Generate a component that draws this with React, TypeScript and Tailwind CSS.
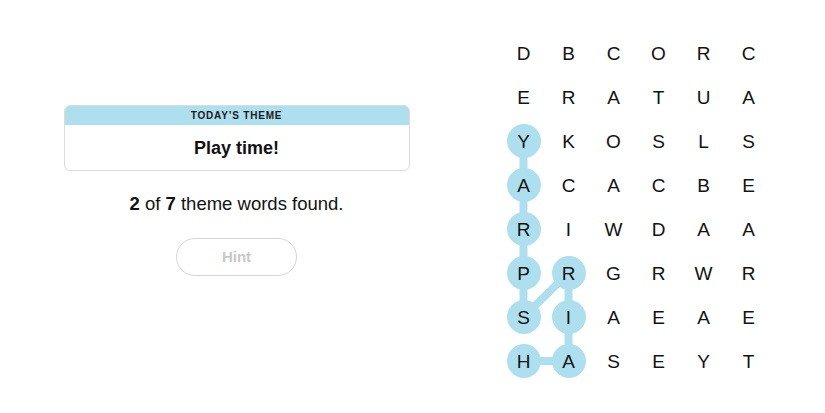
import React from "react";

const GRID = [
  "DBCORC",
  "ERATUA",
  "YKOSLS",
  "ACACBE",
  "RIWDAA",
  "PRGRWR",
  "SIAEAE",
  "HASEYT",
];

const PATH: [number, number][] = [
  [0, 7],
  [1, 7],
  [1, 6],
  [1, 5],
  [0, 6],
  [0, 5],
  [0, 4],
  [0, 3],
  [0, 2],
];

const CW = 45;
const CH = 44;

export default function App() {
  const selected = new Set(PATH.map(([c, r]) => `${c},${r}`));
  const cx = (c: number) => c * CW + CW / 2;
  const cy = (r: number) => r * CH + CH / 2;
  return (
    <div
      className="flex h-[413px] w-[825px] bg-white text-[#121212]"
      style={{ fontFamily: '"Liberation Sans", Arial, sans-serif' }}
    >
      <div className="flex w-[473px] flex-col items-center pt-[105px]">
        <div className="w-[346px] overflow-hidden rounded-[6px] border border-[#dcdcdc]">
          <div className="flex h-[19px] items-center justify-center bg-[#aedfee] text-[10px] font-bold tracking-[0.08em] text-[#1a1a1a]">
            TODAY&rsquo;S THEME
          </div>
          <div className="flex h-[45px] items-center justify-center text-[18px] font-bold leading-none">
            Play time!
          </div>
        </div>
        <div className="mt-[21px] text-[18.5px] leading-[24px]">
          <span className="font-bold">2</span> of <span className="font-bold">7</span> theme words found.
        </div>
        <button className="mt-[22px] flex h-[38px] w-[121px] items-center justify-center rounded-full border border-[#d6d6d6] text-[15px] font-bold text-[#c8c8c8]">
          Hint
        </button>
      </div>
      <div className="ml-[28px] pt-[31px]">
        <div className="relative h-[352px] w-[270px]">
          <svg className="absolute left-0 top-0" width={270} height={352}>
            {PATH.slice(1).map(([c, r], i) => {
              const [pc, pr] = PATH[i];
              return (
                <line
                  key={i}
                  x1={cx(pc)}
                  y1={cy(pr)}
                  x2={cx(c)}
                  y2={cy(r)}
                  stroke="#aedfee"
                  strokeWidth={8}
                  strokeLinecap="round"
                />
              );
            })}
          </svg>
          <div className="relative grid grid-cols-[repeat(6,45px)] grid-rows-[repeat(8,44px)]">
            {GRID.map((row, r) =>
              row.split("").map((ch, c) => {
                const on = selected.has(`${c},${r}`);
                return (
                  <div key={`${c}-${r}`} className="flex items-center justify-center">
                    <div
                      className={
                        "flex h-[34px] w-[34px] items-center justify-center rounded-full text-[19px] leading-none " +
                        (on ? "bg-[#aedfee]" : "")
                      }
                    >
                      {ch}
                    </div>
                  </div>
                );
              })
            )}
          </div>
        </div>
      </div>
    </div>
  );
}
